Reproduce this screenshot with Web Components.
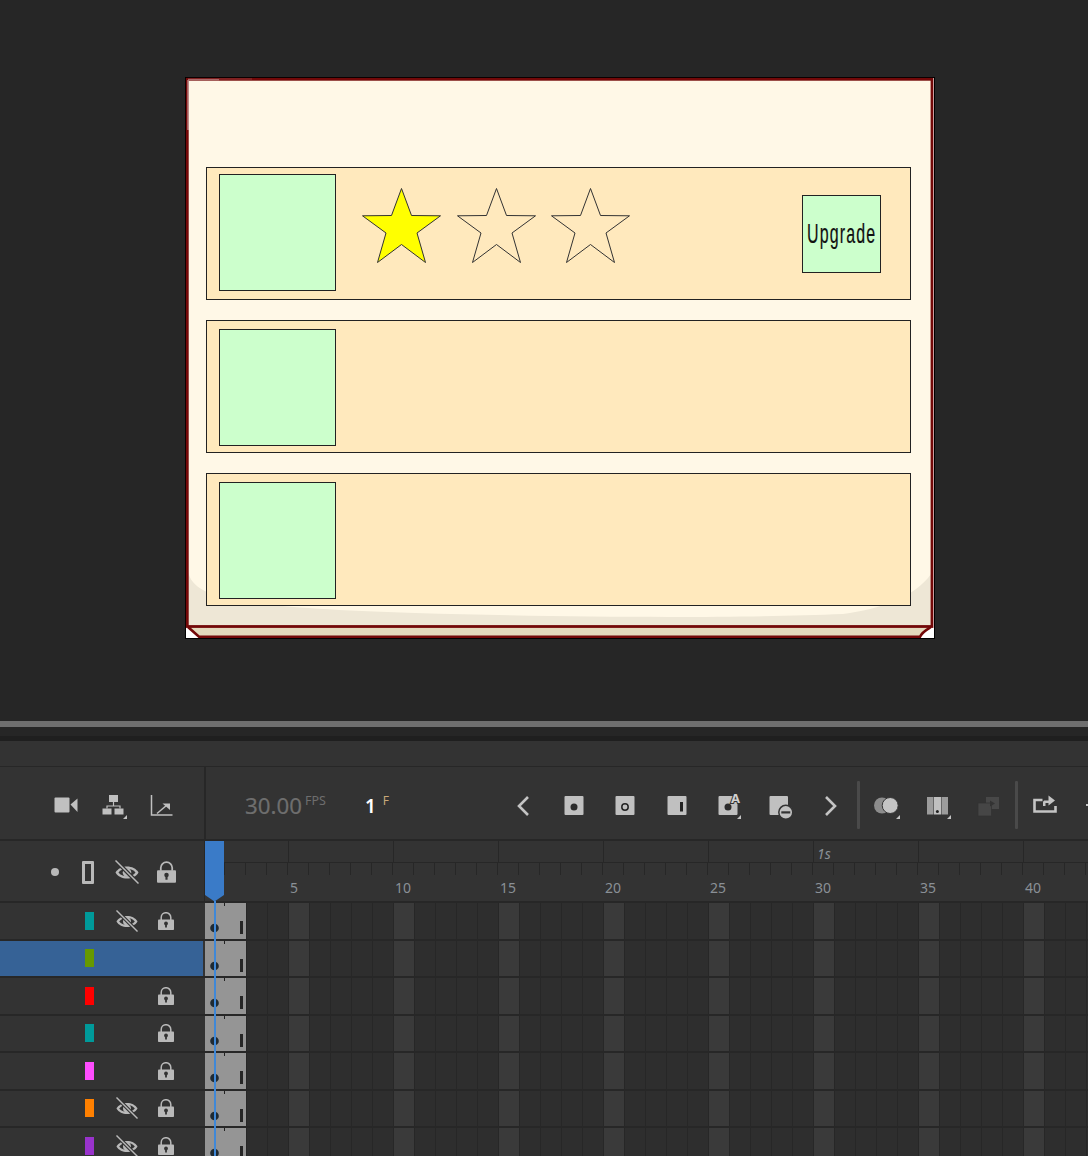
<!DOCTYPE html>
<html>
<head>
<meta charset="utf-8">
<title>Timeline</title>
<style>
  html, body { margin: 0; padding: 0; background: #262626; }
  body { height: 1156px; overflow: hidden; font-family: "Noto Sans", "Open Sans", sans-serif; }
</style>
</head>
<body>
  <stage-area>
    <game-stage>
      <upgrade-row thumb-top="7">
        <rating-star filled></rating-star>
        <rating-star></rating-star>
        <rating-star></rating-star>
        <upgrade-button slot="action">Upgrade</upgrade-button>
      </upgrade-row>
      <upgrade-row thumb-top="9"></upgrade-row>
      <upgrade-row thumb-top="9"></upgrade-row>
    </game-stage>
  </stage-area>
  <split-bar></split-bar>
  <timeline-panel>
    <time-toolbar></time-toolbar>
    <time-ruler></time-ruler>
    <layer-row color="#009a9a" hidden-layer locked></layer-row>
    <layer-row color="#669900" selected></layer-row>
    <layer-row color="#ff0000" locked></layer-row>
    <layer-row color="#009a9a" locked></layer-row>
    <layer-row color="#ff4dff" locked></layer-row>
    <layer-row color="#ff8000" hidden-layer locked></layer-row>
    <layer-row color="#9933cc" hidden-layer locked></layer-row>
  </timeline-panel>

<script>
const CORNER = `<path d="M27 24v4h-4z" fill="#c4c4c4"/>`
const KEY = `<rect x="4.5" y="5" width="19" height="19" rx="1" fill="#c0c0c0"/>`

const ICONS = {
  camera: `<rect x="2.5" y="6.5" width="15" height="15" rx="1" fill="#c0c0c0"/><path d="M18.5 13.5l7-6v13.500z" fill="#c0c0c0"/>`,
  tree: `<g fill="#c0c0c0"><rect x="9" y="4" width="9" height="7"/><rect x="2.500" y="17.500" width="9" height="6"/><rect x="14.500" y="17.500" width="9" height="6"/></g>
    <path d="M13.500 11v4M7 17.500V15h13v2.500" fill="none" stroke="#c0c0c0" stroke-width="1.200"/>${CORNER}`,
  graph: `<path d="M3.500 4v20h21" fill="none" stroke="#c0c0c0" stroke-width="1.500"/><path d="M9 22.500l10-8.500" stroke="#c0c0c0" stroke-width="1.500"/><path d="M14.500 12.500h7.500v6.500z" fill="#c0c0c0"/>`,
  back: `<path d="M19 6l-9 9 9 9" fill="none" stroke="#c4c4c4" stroke-width="2.600"/>`,
  next: `<path d="M9 6l9 9-9 9" fill="none" stroke="#c4c4c4" stroke-width="2.600"/>`,
  key: `${KEY}<circle cx="14" cy="16" r="3.500" fill="#2b2b2b"/>`,
  hollow: `${KEY}<circle cx="14" cy="16" r="3.200" fill="none" stroke="#222" stroke-width="1.500"/>`,
  blank: `${KEY}<rect x="17" y="11" width="3" height="9.500" fill="#222"/>`,
  auto: `${KEY}<circle cx="14" cy="16" r="3.500" fill="#2b2b2b"/>
    <text x="21.500" y="12" text-anchor="middle" font-family="Noto Sans" font-weight="700" font-size="13" fill="#d0d0d0" stroke="#333" stroke-width="2" paint-order="stroke">A</text>${CORNER}`,
  remove: `<rect x="3.500" y="5" width="18.500" height="19" rx="1" fill="#c0c0c0"/><circle cx="19.800" cy="21.300" r="7" fill="#c0c0c0" stroke="#333" stroke-width="1.500"/><rect x="15.300" y="20.300" width="9" height="2.200" fill="#333"/>`,
  onion: `<circle cx="9" cy="14.500" r="8" fill="#8c8c8c"/><circle cx="17.200" cy="14.500" r="8" fill="#c4c4c4" stroke="#333" stroke-width="1"/>${CORNER}`,
  columns: `<rect x="3" y="6" width="6.500" height="17.500" fill="#9c9c9c"/><rect x="10" y="6" width="7" height="17.500" fill="#c0c0c0"/><rect x="17.500" y="6" width="6.500" height="17.500" fill="#9c9c9c"/><circle cx="13.400" cy="20.500" r="1.500" fill="#222"/>${CORNER}`,
  paste: `<rect x="10" y="6" width="13" height="12" fill="#484848"/><rect x="2" y="12" width="13.500" height="13" fill="#464646" stroke="#333" stroke-width=".8"/><path d="M14 9.500l5 3-5 3z" fill="#333"/>`,
  share: `<path d="M11.500 9H3.500v11.500h21V15" fill="none" stroke="#c4c4c4" stroke-width="2.600"/><path d="M12 15v-3.500c0-1.500 1-2 2-2h3.500V4.500l6.500 5-6.500 5v-2.500H14.500V15z" fill="#c4c4c4"/>`,
  stub: `<rect x="4" y="13" width="6" height="2" fill="#c4c4c4"/>`
}

class ToolIcon extends HTMLElement {
  constructor() {
    super()
    this._shadowDom = this.attachShadow({ mode: 'open' })
    this._shadowDom.innerHTML = `
    <style>
      :host { display: flex; justify-content: center; align-items: center; width: var(--w, 51.400px); flex: none; }
      svg { display: block; overflow: visible; }
    </style>
    <svg width="28" height="28" viewBox="0 0 28 28">${ICONS[this.getAttribute('name')]}</svg>`
  }
}

class EyeOff extends HTMLElement {
  constructor() {
    super()
    const size = this.getAttribute('size') || 22
    this._shadowDom = this.attachShadow({ mode: 'open' })
    this._shadowDom.innerHTML = `
    <style>
      :host { display: flex; justify-content: center; align-items: center; }
      svg { display: block; }
    </style>
    <svg width="${size}" height="${size}" viewBox="0 0 24 24">
      <path d="M.5 12.500C5 4.500 19 4.500 23.500 12.500C19 20.500 5 20.500 .5 12.500z" fill="#b9b9b9"/>
      <path d="M3.500 12.500C7 7.500 17 7.500 20.500 12.500C17 17.500 7 17.500 3.500 12.500z" fill="#333"/>
      <circle cx="12" cy="12.500" r="4.300" fill="#b9b9b9"/>
      <path d="M1 1l22 22" stroke="#333" stroke-width="4"/>
      <path d="M.5 .5l23 23" stroke="#b9b9b9" stroke-width="1.500"/>
    </svg>`
  }
}

class LockIcon extends HTMLElement {
  constructor() {
    super()
    const w = this.getAttribute('w') || 16
    const h = this.getAttribute('h') || 18
    this._shadowDom = this.attachShadow({ mode: 'open' })
    this._shadowDom.innerHTML = `
    <style>
      :host { display: flex; justify-content: center; align-items: center; }
      svg { display: block; }
    </style>
    <svg width="${w}" height="${h}" viewBox="0 0 16 18">
      <path d="M3.200 8V5.500a4.800 4.800 0 0 1 9.600 0V8" fill="none" stroke="#b9b9b9" stroke-width="1.500"/>
      <rect y="7.500" width="16" height="10.500" rx=".8" fill="#b9b9b9"/>
      <circle cx="8" cy="11.500" r="1.900" fill="#333"/>
      <rect x="7.100" y="11.500" width="1.800" height="4" fill="#333"/>
    </svg>`
  }
}

class StageArea extends HTMLElement {
  constructor() {
    super()
    this._shadowDom = this.attachShadow({ mode: 'open' })
    this._shadowDom.innerHTML = `
    <style>
      :host { display: block; height: 721px; box-sizing: border-box; padding: 77px 0 0 185px; background: #262626; }
    </style>
    <slot></slot>`
  }
}

class GameStage extends HTMLElement {
  constructor() {
    super()
    this._shadowDom = this.attachShadow({ mode: 'open' })
    this._shadowDom.innerHTML = `
    <style>
      :host { display: flex; flex-direction: column; gap: 20px; position: relative; width: 750px; height: 562px; box-sizing: border-box; padding: 90px 0 0 21px; }
      svg { position: absolute; left: 0; top: 0; }
      slot { display: contents; }
    </style>
    <svg width="750" height="562" viewBox="0 0 750 562">
      <rect width="750" height="562" fill="#000"/>
      <rect x="1" y="1" width="748" height="560" fill="#fff"/>
      <path d="M3 550L14 559.500H735C737 555 741 553 746 550z" fill="#e3d9bc"/>
      <path d="M3 550L14 559.800H735C737 555 741 553 746 550" fill="none" stroke="#730808" stroke-width="2.600"/>
      <rect x="2" y="2" width="745" height="548" fill="#fff8e7"/>
      <path d="M3 495C10 520 40 530 230 536C400 541 560 541 658 537C695 532 730 520 746 497V549.500H3z" fill="#eee7d6"/>
      <rect x="2.300" y="2.300" width="744.700" height="547.200" fill="none" stroke="#730808" stroke-width="2.800"/>
      <path d="M3 3V53" stroke="#fff" stroke-opacity=".35" stroke-width="2"/>
      <path d="M3 2.500H34" stroke="#fff" stroke-opacity=".4" stroke-width="1.500"/>
      <path d="M34 2H67" stroke="#fff" stroke-opacity=".2" stroke-width="1"/>
    </svg>
    <slot></slot>`
  }
}

class UpgradeRow extends HTMLElement {
  constructor() {
    super()
    this._shadowDom = this.attachShadow({ mode: 'open' })
    this._shadowDom.innerHTML = `
    <style>
      :host { display: flex; position: relative; width: 705px; height: 133px; box-sizing: border-box; background: #ffe9bd; border: 1px solid #222; padding: ${this.getAttribute('thumb-top') - 1}px 29px 0 12px; }
      .thumb { width: 117px; height: 117px; box-sizing: border-box; background: #ccffcc; border: 1px solid #222; flex: none; }
      .stars { display: flex; gap: 14.500px; margin: 13px 0 0 25px; align-items: flex-start; }
      .action { margin: 21px 0 0 auto; }
    </style>
    <div class="thumb"></div>
    <div class="stars"><slot></slot></div>
    <div class="action"><slot name="action"></slot></div>`
  }
}

class RatingStar extends HTMLElement {
  constructor() {
    super()
    const fill = this.hasAttribute('filled') ? '#ffff00' : 'none'
    this._shadowDom = this.attachShadow({ mode: 'open' })
    this._shadowDom.innerHTML = `
    <style>
      :host { display: block; width: 80px; height: 76px; }
      svg { display: block; }
    </style>
    <svg width="80" height="76" viewBox="0 0 80 76">
      <path d="M40.500 1.500L50.500 28.500L79.500 28.800L56 46L64.500 75.500L40.500 57.500L16.500 75.500L25 46L1.500 28.800L30.500 28.500z" fill="${fill}" stroke="#333" stroke-width="1"/>
    </svg>`
  }
}

class UpgradeButton extends HTMLElement {
  constructor() {
    super()
    this._shadowDom = this.attachShadow({ mode: 'open' })
    this._shadowDom.innerHTML = `
    <style>
      :host { display: flex; justify-content: center; align-items: center; width: 79px; height: 78px; box-sizing: border-box; background: #ccffcc; border: 1px solid #222; color: #111; font: 28px/1 "Liberation Sans", sans-serif; }
      span { display: block; transform: scaleX(.57); letter-spacing: 2px; white-space: nowrap; -webkit-text-stroke: .2px #111; }
    </style>
    <span><slot></slot></span>`
  }
}

class SplitBar extends HTMLElement {
  constructor() {
    super()
    this._shadowDom = this.attachShadow({ mode: 'open' })
    this._shadowDom.innerHTML = `
    <style>
      :host { display: block; height: 20px; box-sizing: border-box; background: #262626; border-top: 6px solid #6f6f6f; border-bottom: 5px solid #1f1f1f; }
    </style>`
  }
}

class TimelinePanel extends HTMLElement {
  constructor() {
    super()
    this._shadowDom = this.attachShadow({ mode: 'open' })
    this._shadowDom.innerHTML = `
    <style>
      :host { display: block; position: relative; background: #333; padding-top: 25px; }
      .head { position: absolute; left: 205px; top: 100px; }
      .line { position: absolute; left: 214px; top: 160px; width: 1.500px; height: 300px; background: #3f88d8; }
    </style>
    <slot></slot>
    <svg class="head" width="19" height="61" viewBox="0 0 19 61"><path d="M0 0H19V54L9.500 60.500L0 54z" fill="#3a7bc8"/></svg>
    <div class="line"></div>`
  }
}

class TimeToolbar extends HTMLElement {
  constructor() {
    super()
    this._shadowDom = this.attachShadow({ mode: 'open' })
    this._shadowDom.innerHTML = `
    <style>
      :host { display: flex; height: 75px; box-sizing: border-box; border-top: 1px solid #272727; border-bottom: 2px solid #272727; overflow: hidden; }
      .left { display: flex; width: 204px; box-sizing: border-box; padding: 3px 0 0 41.500px; --w: 48px; flex: none; }
      .main { display: flex; align-items: center; flex: 1; border-left: 2px solid #272727; padding-top: 3px; min-width: 0; }
      .counts { display: flex; width: 291px; box-sizing: border-box; padding-left: 39px; align-items: flex-start; align-self: flex-start; margin-top: 21px; flex: none; color: #6e6e6e; }
      .fps { font-size: 22.300px; line-height: 30px; -webkit-text-stroke: .2px #6e6e6e; }
      .unit { font-size: 12.500px; line-height: 14px; margin: 3px 0 0 3px; }
      .frame { color: #fff; font-size: 19px; font-weight: 600; line-height: 30px; margin-left: 39px; }
      .f { color: #c8a878; font-size: 12px; line-height: 14px; margin: 3px 0 0 7px; }
      .sep { width: 3px; height: 48px; background: #4a4a4a; border-radius: 1px; flex: none; }
      .sep.one { margin: 0 1.500px 0 0; }
      .sep.two { margin: 0 .8px 0 0; }
    </style>
    <div class="left">
      <tool-icon name="camera"></tool-icon>
      <tool-icon name="tree"></tool-icon>
      <tool-icon name="graph"></tool-icon>
    </div>
    <div class="main">
      <div class="counts">
        <span class="fps">30.00</span><span class="unit">FPS</span>
        <span class="frame">1</span><span class="f">F</span>
      </div>
      <tool-icon name="back"></tool-icon>
      <tool-icon name="key"></tool-icon>
      <tool-icon name="hollow"></tool-icon>
      <tool-icon name="blank"></tool-icon>
      <tool-icon name="auto"></tool-icon>
      <tool-icon name="remove"></tool-icon>
      <tool-icon name="next"></tool-icon>
      <div class="sep one"></div>
      <tool-icon name="onion"></tool-icon>
      <tool-icon name="columns"></tool-icon>
      <tool-icon name="paste"></tool-icon>
      <div class="sep two"></div>
      <tool-icon name="share"></tool-icon>
      <tool-icon name="stub"></tool-icon>
    </div>`
  }
}

class TimeRuler extends HTMLElement {
  constructor() {
    super()
    let top = ''
    let labels = ''
    for (let n = 5; n <= 40; n += 5) {
      top += `<div class="sec">${n == 30 ? '<i>1s</i>' : ''}</div>`
      labels += `<div class="num">${n}</div>`
    }
    this._shadowDom = this.attachShadow({ mode: 'open' })
    this._shadowDom.innerHTML = `
    <style>
      :host { display: flex; height: 62px; box-sizing: border-box; border-bottom: 2px solid #272727; overflow: hidden; }
      .left { display: grid; grid-template-columns: 50px 10px 23px 11px 21px 24px 17px 20px; align-items: center; width: 204px; flex: none; padding-top: 2px; box-sizing: border-box; }
      .dot { grid-column: 2; width: 8px; height: 8px; border-radius: 50%; background: #b9b9b9; margin-left: 1px; }
      .frame { grid-column: 4; width: 12px; height: 23px; margin-left: -1px; box-sizing: border-box; border: 3px solid #b9b9b9; border-radius: 1px; }
      eye-off { grid-column: 6; }
      lock-icon { grid-column: 8; }
      .right { flex: 1; border-left: 1px solid #272727; min-width: 0; }
      .tops, .labels { display: flex; padding-left: 83px; }
      .tops { height: 21px; border-bottom: 1px solid #272727; }
      .sec { width: 105px; flex: none; box-sizing: border-box; border-left: 1px solid #272727; padding-left: 3px; font-size: 14px; line-height: 25px; color: #8a9096; }
      .ticks { height: 12px; background: repeating-linear-gradient(90deg, transparent 0 19px, #272727 19px 20px, transparent 20px 21px); }
      .labels { height: 26px; }
      .num { width: 105px; flex: none; box-sizing: border-box; padding-left: 2px; font-size: 14px; line-height: 26px; color: #8a9096; }
    </style>
    <div class="left">
      <div class="dot"></div>
      <div class="frame"></div>
      <eye-off size="24"></eye-off>
      <lock-icon w="19" h="22"></lock-icon>
    </div>
    <div class="right">
      <div class="tops">${top}</div>
      <div class="ticks"></div>
      <div class="labels">${labels}</div>
    </div>`
  }
}

class LayerRow extends HTMLElement {
  constructor() {
    super()
    const color = this.getAttribute('color')
    const eye = this.hasAttribute('hidden-layer') ? '<eye-off></eye-off>' : '<span></span>'
    const lock = this.hasAttribute('locked') ? '<lock-icon></lock-icon>' : '<span></span>'
    this._shadowDom = this.attachShadow({ mode: 'open' })
    this._shadowDom.innerHTML = `
    <style>
      :host { display: flex; height: 37.500px; box-sizing: border-box; border-bottom: 2px solid #272727; overflow: hidden; }
      .left { display: grid; grid-template-columns: 85px 9px 21px 24px 17px 20px; align-items: center; width: 203px; flex: none; margin-right: 2px; }
      :host([selected]) .left { background: #366296; }
      .swatch { grid-column: 2; height: 18px; background: ${color}; }
      .track { flex: 1; min-width: 0; background:
        repeating-linear-gradient(90deg, transparent 0 20px, #272727 20px 21px),
        repeating-linear-gradient(90deg, #2e2e2e 0 84px, #3a3a3a 84px 105px); }
      svg { display: block; }
    </style>
    <div class="left">
      <div class="swatch"></div>
      <span></span>
      ${eye}
      <span></span>
      ${lock}
    </div>
    <div class="track">
      <svg width="41" height="36" viewBox="0 0 41 36">
        <rect width="41" height="36" fill="#959595"/>
        <rect x="19" width="1" height="3" fill="#222"/>
        <circle cx="9.500" cy="25" r="4.300" fill="#1f2a33"/>
        <rect x="35" y="18" width="3" height="13" fill="#262626"/>
      </svg>
    </div>`
  }
}

window.customElements.define('tool-icon', ToolIcon)
window.customElements.define('eye-off', EyeOff)
window.customElements.define('lock-icon', LockIcon)
window.customElements.define('stage-area', StageArea)
window.customElements.define('game-stage', GameStage)
window.customElements.define('upgrade-row', UpgradeRow)
window.customElements.define('rating-star', RatingStar)
window.customElements.define('upgrade-button', UpgradeButton)
window.customElements.define('split-bar', SplitBar)
window.customElements.define('timeline-panel', TimelinePanel)
window.customElements.define('time-toolbar', TimeToolbar)
window.customElements.define('time-ruler', TimeRuler)
window.customElements.define('layer-row', LayerRow)
</script>
</body>
</html>
